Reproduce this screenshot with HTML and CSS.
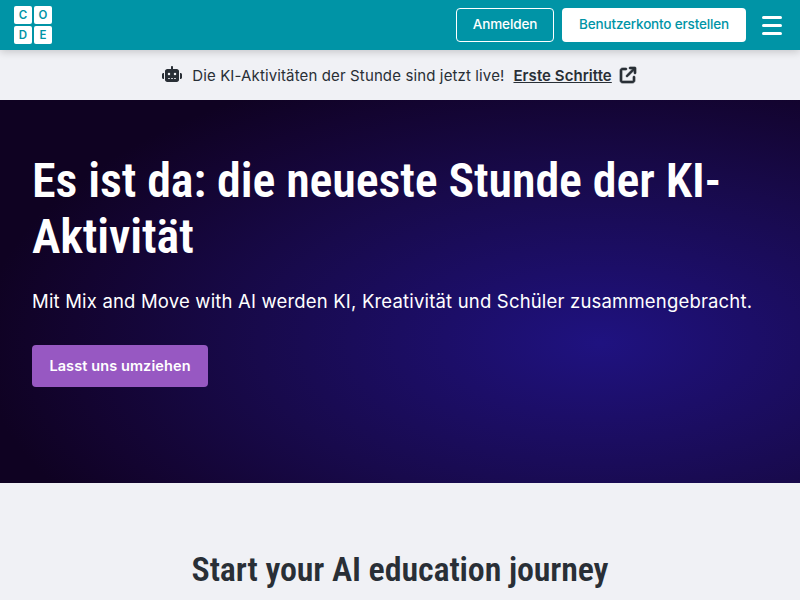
FILE: index.html
```html
<!DOCTYPE html>
<html lang="de">
<head>
<meta charset="utf-8">
<title>Code.org</title>
<link rel="stylesheet" href="styles.css">
</head>
<body>
<header class="topbar">
  <div class="logo" aria-label="Code.org">
    <span class="logo-cell">C</span><span class="logo-cell">O</span>
    <span class="logo-cell">D</span><span class="logo-cell">E</span>
  </div>
  <nav class="actions">
    <a class="btn btn-outline">Anmelden</a>
    <a class="btn btn-solid">Benutzerkonto erstellen</a>
    <span class="burger"><i></i><i></i><i></i></span>
  </nav>
</header>
<div class="banner">
  <svg class="robot" width="20" height="16" viewBox="0 0 640 512">
    <path d="M320 0c17.700 0 32 14.300 32 32V96H472c39.800 0 72 32.200 72 72V440c0 39.800-32.200 72-72 72H168c-39.800 0-72-32.200-72-72V168c0-39.800 32.200-72 72-72H288V32c0-17.700 14.300-32 32-32zM208 384c-8.800 0-16 7.200-16 16s7.200 16 16 16h32c8.800 0 16-7.200 16-16s-7.200-16-16-16H208zm96 0c-8.800 0-16 7.200-16 16s7.200 16 16 16h32c8.800 0 16-7.200 16-16s-7.200-16-16-16H304zm96 0c-8.800 0-16 7.200-16 16s7.200 16 16 16h32c8.800 0 16-7.200 16-16s-7.200-16-16-16H400zM264 256a40 40 0 1 0 -80 0 40 40 0 1 0 80 0zm152 40a40 40 0 1 0 0-80 40 40 0 1 0 0 80zM48 224H64V416H48c-26.500 0-48-21.500-48-48V272c0-26.500 21.500-48 48-48zm544 0c26.500 0 48 21.500 48 48v96c0 26.500-21.500 48-48 48H576V224h16z"/>
  </svg>
  <span class="banner-text">Die KI-Aktivitäten der Stunde sind jetzt live!</span>
  <a class="banner-link">Erste Schritte</a>
  <svg class="ext" width="16" height="16" viewBox="0 0 512 512">
    <path d="M320 0c-17.700 0-32 14.300-32 32s14.300 32 32 32h82.700L201.400 265.400c-12.500 12.500-12.500 32.800 0 45.300s32.800 12.500 45.300 0L448 109.300V192c0 17.700 14.300 32 32 32s32-14.300 32-32V32c0-17.700-14.300-32-32-32H320zM80 32C35.800 32 0 67.800 0 112V432c0 44.200 35.800 80 80 80H400c44.200 0 80-35.800 80-80V320c0-17.700-14.300-32-32-32s-32 14.300-32 32V432c0 8.800-7.200 16-16 16H80c-8.800 0-16-7.200-16-16V112c0-8.800 7.200-16 16-16H192c17.700 0 32-14.300 32-32s-14.300-32-32-32H80z"/>
  </svg>
</div>
<section class="hero">
  <h1>Es ist da: die neueste Stunde der KI-Aktivität</h1>
  <p>Mit Mix and Move with AI werden KI, Kreativität und Schüler zusammengebracht.</p>
  <a class="cta">Lasst uns umziehen</a>
</section>
<section class="journey">
  <h2>Start your AI education journey</h2>
</section>
</body>
</html>
```
FILE: styles.css
```css
* { box-sizing: border-box; }
html, body { margin: 0; height: 100%; overflow: hidden; }
body { background: #f0f1f5; font-family: "Inter", "Liberation Sans", sans-serif; color: #292f36; }
.topbar {
  height: 50px; background: #0094a6; display: flex; align-items: center;
  justify-content: space-between; padding: 0 18px 0 14px;
  box-shadow: 0 2px 8px rgba(0,0,0,.18); position: relative;
}
.logo { width: 38px; display: grid; grid-template-columns: 18px 18px; gap: 2px; }
.logo-cell {
  height: 18px; background: #fff; border-radius: 2px; color: #0094a6;
  font: 600 11.500px/18px "Inter", sans-serif; text-align: center;
}
.actions { display: flex; align-items: center; }
.btn {
  height: 34px; padding-bottom: 2px; border-radius: 4px; display: flex; align-items: center; justify-content: center;
  font-size: 13.500px; font-weight: 500;
}
.btn-outline { width: 98px; border: 1px solid #fff; color: #fff; letter-spacing: -.1px; }
.btn-solid { width: 184px; background: #fff; color: #0094a6; margin-left: 8px; letter-spacing: -.17px; }
.burger { display: flex; flex-direction: column; gap: 5px; width: 20px; margin-left: 16px; }
.burger i { display: block; height: 3px; background: #fff; border-radius: 2px; }
.banner {
  height: 50px; display: flex; align-items: center; justify-content: center;
  font-size: 15px; padding-right: 2px;
}
.robot { margin-right: 10px; margin-top: -3px; fill: #292f36; }
.banner-text { margin-right: 9px; letter-spacing: .13px; }
.banner-link { font-weight: 600; text-decoration: underline; margin-right: 8px; letter-spacing: .05px; }
.ext { fill: #292f36; stroke: #292f36; stroke-width: 22; overflow: visible; }
.hero {
  height: 383px; padding: 53px 32px 0; color: #fff;
  background: radial-gradient(ellipse 620px 300px at 600px 243px, #1f1280 0%, #1c0e68 25%, #180a4c 55%, #130430 85%, #0f0222 100%), #0f0222;
}
.hero h1 {
  margin: 0; font: 600 48px/56px "Roboto", sans-serif; font-stretch: 75%;
  letter-spacing: -.1px;
}
.hero p { margin: 21px 0 0; font-size: 18.500px; line-height: 30px; letter-spacing: .18px; }
.cta {
  margin-top: 29px; padding-bottom: 2px; display: inline-flex; align-items: center; justify-content: center;
  width: 176px; height: 42px; border-radius: 4px; background: #9758c2;
  font-size: 14.500px; font-weight: 600; letter-spacing: .1px;
}
.journey { padding-top: 62px; text-align: center; }
.journey h2 { margin: 0; font: 600 34px/48px "Roboto", sans-serif; font-stretch: 75%; color: #292f36; letter-spacing: -.13px; }
```
